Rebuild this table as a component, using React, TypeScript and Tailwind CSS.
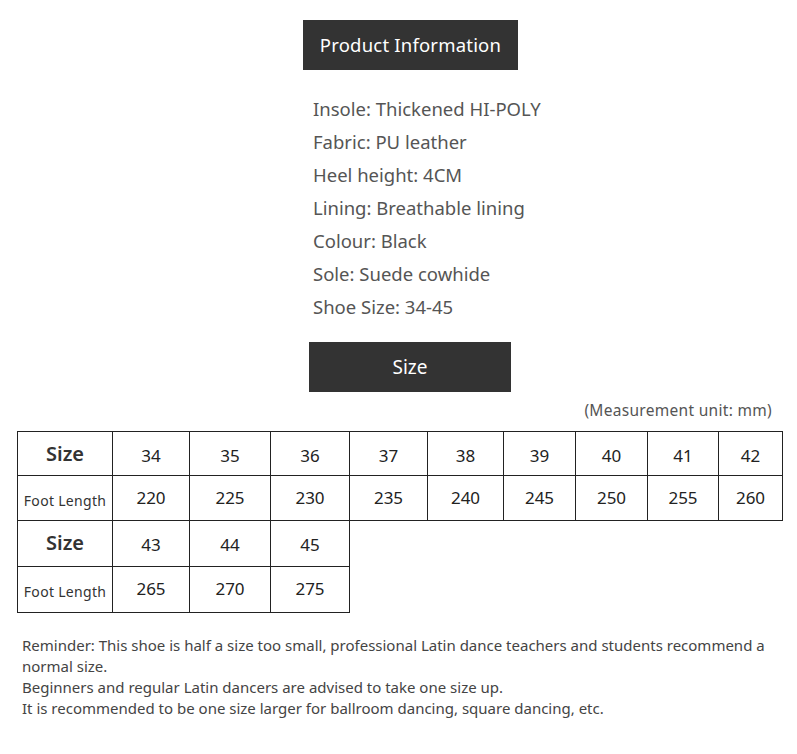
const info = [
  "Insole: Thickened HI-POLY",
  "Fabric: PU leather",
  "Heel height: 4CM",
  "Lining: Breathable lining",
  "Colour: Black",
  "Sole: Suede cowhide",
  "Shoe Size: 34-45",
];

const colWidths = [95, 77, 81, 79, 78, 76, 72, 72, 71, 64];

const rowsA = {
  sizes: ["34", "35", "36", "37", "38", "39", "40", "41", "42"],
  lengths: ["220", "225", "230", "235", "240", "245", "250", "255", "260"],
};
const rowsB = {
  sizes: ["43", "44", "45"],
  lengths: ["265", "270", "275"],
};

function SizeTable({ sizes, lengths, tall }: { sizes: string[]; lengths: string[]; tall?: boolean }) {
  const widths = colWidths.slice(0, sizes.length + 1);
  const total = widths.reduce((a, b) => a + b, 0);
  return (
    <table className="border-collapse border-[1.5px] border-[#333] table-fixed" style={{ width: total }}>
      <colgroup>
        {widths.map((w, i) => (
          <col key={i} style={{ width: w }} />
        ))}
      </colgroup>
      <tbody>
        <tr className={tall ? "h-[46px]" : "h-[44px]"}>
          <td className="border border-[#222] text-center text-[20px] font-semibold text-[#333]">Size</td>
          {sizes.map((s) => (
            <td key={s} className="border border-[#222] text-center text-[17px] text-[#222] pt-1">
              {s}
            </td>
          ))}
        </tr>
        <tr className={tall ? "h-[46px]" : "h-[45px]"}>
          <td className="border border-[#222] text-center text-[14px] text-[#333] tracking-[0.3px] pt-1">
            Foot Length
          </td>
          {lengths.map((l) => (
            <td key={l} className="border border-[#222] text-center text-[17px] text-[#222]">
              {l}
            </td>
          ))}
        </tr>
      </tbody>
    </table>
  );
}

export default function App() {
  return (
    <div className="w-[797px] h-[754px] bg-white font-['Noto_Sans',sans-serif] overflow-hidden">
      {/* Product Information header */}
      <div className="pt-5 flex justify-center">
        <div className="ml-[24px] w-[215px] h-[50px] bg-[#333333] flex items-center justify-center text-white text-[18.5px] tracking-[0.2px]">
          Product Information
        </div>
      </div>

      {/* Info list */}
      <div className="mt-[22px] pl-[313px] flex flex-col">
        {info.map((line) => (
          <div key={line} className="h-[33px] leading-[33px] text-[18.5px] text-[#555]">
            {line}
          </div>
        ))}
      </div>

      {/* Size header */}
      <div className="mt-[19px] flex pl-[309px]">
        <div className="w-[202px] h-[50px] bg-[#333333] flex items-center justify-center text-white text-[19px]">
          Size
        </div>
      </div>

      <div className="mt-[8px] pr-[25px] text-right text-[15.5px] text-[#555] tracking-[0.3px] leading-[20px]">
        (Measurement unit: mm)
      </div>

      {/* Tables */}
      <div className="mt-[11px] pl-[17px] flex flex-col">
        <SizeTable sizes={rowsA.sizes} lengths={rowsA.lengths} />
        <div className="-mt-[1.5px]">
          <SizeTable sizes={rowsB.sizes} lengths={rowsB.lengths} tall />
        </div>
      </div>

      {/* Reminder */}
      <div className="mt-[22px] pl-[22px] pr-[20px] text-[15px] leading-[21px] text-[#444]">
        <p>
          Reminder: This shoe is half a size too small, professional Latin dance teachers and students recommend a
          normal size.
        </p>
        <p>Beginners and regular Latin dancers are advised to take one size up.</p>
        <p>It is recommended to be one size larger for ballroom dancing, square dancing, etc.</p>
      </div>
    </div>
  );
}
